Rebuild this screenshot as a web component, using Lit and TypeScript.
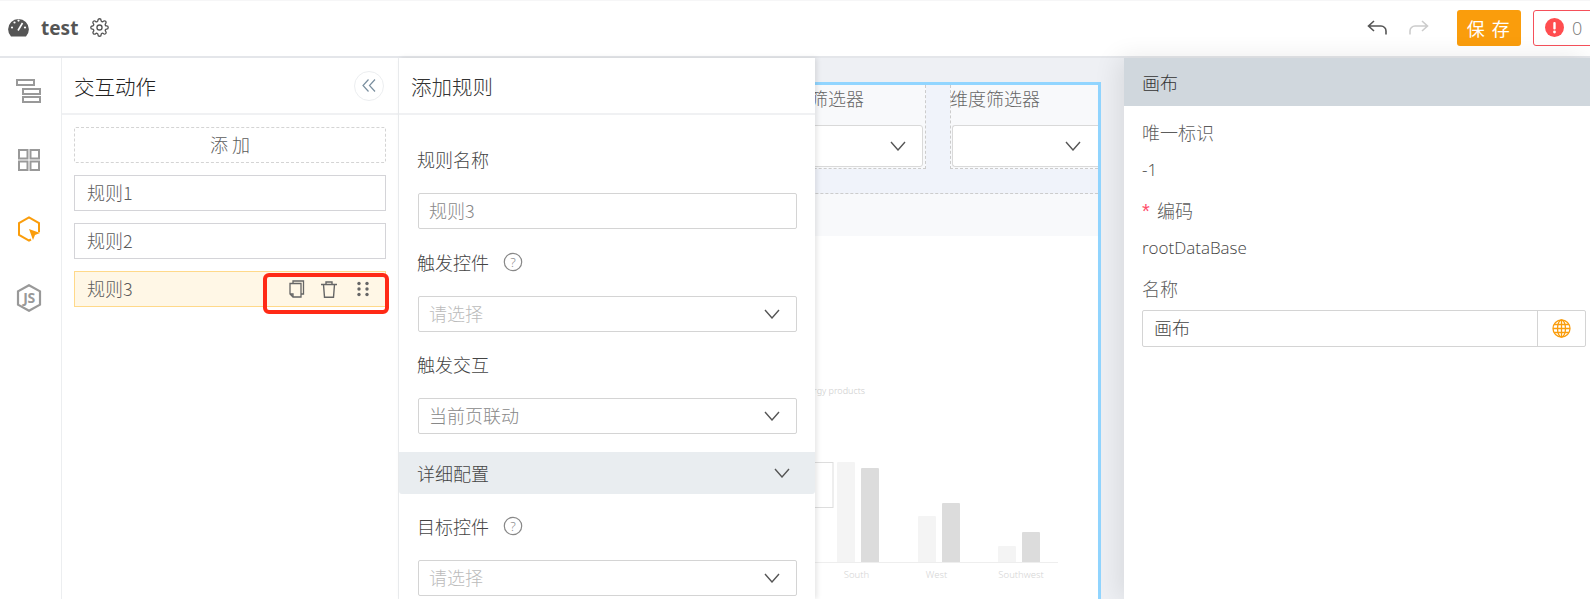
import { LitElement, html, css, svg } from "lit";
import { customElement } from "lit/decorators.js";

const chevron = html`<svg class="chev" width="16" height="10" viewBox="0 0 16 10"><path d="M1 1l7 8 7-8" fill="none" stroke="#555" stroke-width="1.4"/></svg>`;
const help = html`<svg class="help" width="20" height="20" viewBox="0 0 20 20"><circle cx="10" cy="10" r="8.7" fill="none" stroke="#888" stroke-width="1.2"/><text x="10" y="14.800" text-anchor="middle" font-size="13" fill="#888" font-family="Noto Sans">?</text></svg>`;
const gearPath = "M19.4 15a1.65 1.65 0 0 0 .33 1.82l.06.06a2 2 0 0 1 0 2.83 2 2 0 0 1-2.83 0l-.06-.06a1.65 1.65 0 0 0-1.82-.33 1.65 1.65 0 0 0-1 1.51V21a2 2 0 0 1-2 2 2 2 0 0 1-2-2v-.09A1.65 1.65 0 0 0 9 19.4a1.65 1.65 0 0 0-1.82.33l-.06.06a2 2 0 0 1-2.83 0 2 2 0 0 1 0-2.83l.06-.06a1.65 1.65 0 0 0 .33-1.82 1.65 1.65 0 0 0-1.51-1H3a2 2 0 0 1-2-2 2 2 0 0 1 2-2h.09A1.65 1.65 0 0 0 4.6 9a1.65 1.65 0 0 0-.33-1.82l-.06-.06a2 2 0 0 1 0-2.83 2 2 0 0 1 2.83 0l.06.06a1.65 1.65 0 0 0 1.82.33H9a1.65 1.65 0 0 0 1-1.51V3a2 2 0 0 1 2-2 2 2 0 0 1 2 2v.09a1.65 1.65 0 0 0 1 1.51 1.65 1.65 0 0 0 1.82-.33l.06-.06a2 2 0 0 1 2.83 0 2 2 0 0 1 0 2.83l-.06.06a1.65 1.65 0 0 0-.33 1.82V9a1.65 1.65 0 0 0 1.51 1H21a2 2 0 0 1 2 2 2 2 0 0 1-2 2h-.09a1.65 1.65 0 0 0-1.51 1z";

const bars: [number, number, number, string][] = [
  [836, 462, 18, "#f4f4f4"], [860, 468, 18, "#dcdcdc"],
  [917, 516, 18, "#f4f4f4"], [941, 503, 18, "#dcdcdc"],
  [997, 546, 18, "#f4f4f4"], [1021, 532, 18, "#dcdcdc"],
];
const xLabels: [number, string][] = [[855.5, "South"], [935.5, "West"], [1020, "Southwest"]];

@customElement("app-root")
export class AppRoot extends LitElement {
  static styles = css`
    :host { display: block; height: 599px; overflow: hidden; background: #fff; color: #5c5c5c;
      font-family: "Noto Sans CJK SC", "Open Sans", sans-serif; font-size: 18px; font-weight: 300; }
    * { box-sizing: border-box; }
    svg { display: block; flex: none; }
    .top { height: 58px; display: flex; align-items: center; padding: 0 0 2px 8px; border-top: 1px solid #f6f6f7; border-bottom: 2px solid #e4e6ea; overflow: hidden; }
    .name { font-family: "Noto Sans", sans-serif; font-weight: 700; font-size: 19px; color: #555; margin: 0 12px 0 12px; line-height: 24px; }
    .undo { margin-left: auto; margin-right: 22px; }
    .redo { margin-right: 28px; }
    .save { width: 64px; height: 36px; background: #fa9d0c; color: #fff; border-radius: 3px; display: flex; align-items: center; justify-content: center; letter-spacing: 1.5px; margin-right: 12px; font-weight: 400; }
    .err { flex: none; width: 76px; height: 36px; margin-right: -19px; border: 1px solid #f5505a; border-radius: 3px; display: flex; align-items: center; padding-left: 11px; gap: 8px; color: #777; font-family: "Open Sans", sans-serif; }
    .main { display: flex; height: 541px; }
    .rail { width: 62px; flex: none; border-right: 1px solid #eceef0; display: flex; flex-direction: column; align-items: center; padding: 20px 3px 0 0; gap: 43px; }
    .rail-cell { height: 26px; display: flex; align-items: center; justify-content: center; }
    .p1 { width: 337px; flex: none; border-right: 1px solid #eceef0; }
    .head { height: 57px; display: flex; align-items: center; border-bottom: 2px solid #f0f1f3; font-size: 20.5px; color: #333; }
    .p1 .head { padding: 0 14px 0 12px; justify-content: space-between; color: #222; }
    .collapse { width: 30px; height: 30px; border: 1px solid #eceef0; border-radius: 50%; display: flex; align-items: center; justify-content: center; }
    .list { padding: 12px 12px 0; display: flex; flex-direction: column; gap: 12px; }
    .add { height: 36px; border: 1px dashed #d4d4d4; border-radius: 2px; display: flex; align-items: center; justify-content: center; padding-bottom: 2px; }
    .rule { height: 36px; border: 1px solid #d4d4d8; display: flex; align-items: center; padding: 0 0 2px 12px; position: relative; }
    .rule.on { background: #fff7e6; border-color: #ffd98a; }
    .acts { margin-left: auto; display: flex; align-items: center; gap: 16px; padding: 2px 15px 0 0; }
    .trash { margin-right: 3px; }
    .mark { position: absolute; left: 188px; top: 1px; width: 126px; height: 41px; border: 4px solid #ff2a16; border-radius: 6px; }
    .p2 { width: 416px; flex: none; background: #fff; position: relative; z-index: 2; box-shadow: 2px 0 5px rgba(0,0,0,.1); }
    .p2 .head { padding-left: 12px; }
    .form { padding: 27px 18px 0 19px; }
    .item { margin-bottom: 16px; }
    .item:nth-child(2) { margin-bottom: 15px; }
    .item.last { margin-bottom: 18px; }
    .label { height: 36px; margin: 0 0 15px -1px; display: flex; align-items: center; gap: 14px; color: #444; padding-bottom: 2px; }
    .field { height: 36px; border: 1px solid #d4d4d4; border-radius: 2px; display: flex; align-items: center; justify-content: space-between; padding: 0 16px 0 10px; }
    .field span { padding-bottom: 2px; }
    .ph { color: #bbb; }
    .val { color: #888; }
    .band { height: 42px; background: #e9edf0; border-radius: 0 0 3px 3px; display: flex; align-items: center; justify-content: space-between; padding: 0 25px 0 18px; color: #444; }
    .form2 { padding: 15px 18px 0 19px; }
    .canvas { flex: 1; min-width: 0; background: #eef0f4; display: flex; justify-content: flex-end; padding: 24px 23px 0 0; overflow: hidden; }
    .frame { flex: none; width: 700px; height: 600px; border-top: 3px solid #91d5ff; border-right: 3px solid #91d5ff; background: #fff; }
    .filters { height: 109px; background: #f0f3fa; display: flex; justify-content: flex-end; border-bottom: 1px dashed #ccc; align-items: flex-start; }
    .filter { height: 84px; background: #f8f9fb; border: 1px dashed #ccc; border-top: none; padding: 0 2px 0 1px; }
    .filter.a { width: 152px; margin-right: 24px; }
    .filter.b { width: 148px; border-right: none; padding-right: 0; }
    .flabel { height: 40px; line-height: 26px; color: #666; margin-left: -2px; white-space: nowrap; }
    .fsel { height: 42px; background: #fff; border: 1px solid #d9d9d9; border-radius: 3px; display: flex; align-items: center; justify-content: flex-end; padding-right: 16px; }
    .filter.b .fsel { border-right: none; border-radius: 3px 0 0 3px; padding-right: 17px; }
    .strip { height: 42px; background: #f8f9fb; }
    .chart { margin-left: auto; }
    .chart text { font-family: "Noto Sans", sans-serif; }
    .right { width: 466px; flex: none; background: #fff; position: relative; box-shadow: -6px 0 24px rgba(0,0,0,.09); }
    .rhead { height: 48px; background: #d0d7dd; display: flex; align-items: center; padding-left: 18px; color: #333; }
    .rbody { padding: 8px 4px 0 18px; }
    .rl, .rv { height: 37px; display: flex; align-items: center; }
    .rl { padding-bottom: 1px; }
    .rv { margin-bottom: 4px; font-size: 17px; font-family: "Open Sans", sans-serif; color: #444; }
    .star { color: #ff4d6a; width: 15px; font-size: 20px; font-family: "Liberation Sans", sans-serif; padding-top: 3px; }
    .rinput { height: 37px; margin-top: 3px; border: 1px solid #d4d4d4; border-radius: 2px; display: flex; align-items: center; color: #444; }
    .rtext { flex: 1; padding: 0 0 3px 11px; }
    .addon { width: 48px; height: 100%; border-left: 1px solid #d4d4d4; display: flex; align-items: center; justify-content: center; }
  `;

  field(label: string, value: string, kind: string, withHelp = false, last = false) {
    return html`<div class="item ${last ? "last" : ""}">
      <div class="label">${label}${withHelp ? help : ""}</div>
      <div class="field"><span class=${kind}>${value}</span>${kind === "val" && value === "规则3" ? "" : chevron}</div>
    </div>`;
  }

  render() {
    return html`
      <div class="top">
        <svg width="21" height="21" viewBox="0 0 21 21"><path d="M3 19.5A10.4 10.4 0 1 1 18 19.5z" fill="#555"/><g fill="#fff"><circle cx="4" cy="10.5" r="1.1"/><circle cx="6.5" cy="5.5" r="1.1"/><circle cx="10.5" cy="3.6" r="1.1"/><circle cx="17" cy="10.5" r="1.1"/></g><path d="M10 13.5l4.5-7.5" stroke="#fff" stroke-width="1.6"/></svg>
        <span class="name">test</span>
        <svg width="19" height="19" viewBox="0 0 24 24" fill="none" stroke="#555" stroke-width="1.7"><circle cx="12" cy="12" r="3.2"/><path d=${gearPath}/></svg>
        <svg class="undo" width="20" height="15" viewBox="0 0 20 15" fill="none" stroke="#555" stroke-width="1.6"><path d="M7 1L1.5 6 7 11M1.5 6H14a5 5 0 0 1 5 5v3.5"/></svg>
        <svg class="redo" width="20" height="15" viewBox="0 0 20 15" fill="none" stroke="#ccc" stroke-width="1.6"><path d="M13 1l5.500 5L13 11M18.500 6H6a5 5 0 0 0-5 5v3.500"/></svg>
        <div class="save">保 存</div>
        <div class="err">
          <svg width="19" height="19" viewBox="0 0 19 19"><circle cx="9.500" cy="9.500" r="9.500" fill="#ff4d4f"/><rect x="8.300" y="4" width="2.400" height="7.500" rx="1" fill="#fff"/><circle cx="9.500" cy="14" r="1.400" fill="#fff"/></svg>
          <span>0</span>
        </div>
      </div>
      <div class="main">
        <div class="rail">
          <div class="rail-cell"><svg width="26" height="26" viewBox="0 0 26 26" fill="none" stroke="#999" stroke-width="2"><rect x="1" y="2" width="17" height="5"/><rect x="7" y="11" width="17" height="5"/><rect x="7" y="19" width="17" height="5"/></svg></div>
          <div class="rail-cell"><svg width="24" height="24" viewBox="0 0 24 24" fill="none" stroke="#999" stroke-width="2"><rect x="2" y="2" width="8.500" height="8.500"/><rect x="13.500" y="2" width="8.500" height="8.500"/><rect x="2" y="13.500" width="8.500" height="8.500"/><rect x="13.500" y="13.500" width="8.500" height="8.500"/></svg></div>
          <div class="rail-cell"><svg width="24" height="26" viewBox="0 0 24 26"><path d="M14 23.500l-2 1L2 18.800V7.200L12 1.500l10 5.700v9" fill="none" stroke="#fa9d0c" stroke-width="2"/><path d="M12 13l11 4-5 2-2 5z" fill="#fa9d0c"/></svg></div>
          <div class="rail-cell"><svg width="26" height="28" viewBox="0 0 26 28"><path d="M13 1.200l11 6.200v13.200l-11 6.200-11-6.200V7.400z" fill="none" stroke="#999" stroke-width="2.200"/><text x="13" y="19" text-anchor="middle" font-size="14" font-weight="700" letter-spacing="-.5" fill="#999" font-family="Noto Sans">JS</text></svg></div>
        </div>
        <div class="p1">
          <div class="head"><span>交互动作</span>
            <div class="collapse"><svg width="14" height="13" viewBox="0 0 14 13" fill="none" stroke="#7a8f9f" stroke-width="1.200"><path d="M6.500 .5L1 6.500l5.500 6M13 .5L7.500 6.500l5.500 6"/></svg></div>
          </div>
          <div class="list">
            <div class="add">添 加</div>
            <div class="rule">规则1</div>
            <div class="rule">规则2</div>
            <div class="rule on">规则3
              <div class="acts">
                <svg width="16" height="18" viewBox="0 0 16 18" fill="none" stroke="#666" stroke-width="1.300"><path d="M4 3.500V1h10.500v13H12"/><path d="M1 3.500h11V17H4l-3-3zM1 14h3v3"/></svg>
                <svg class="trash" width="16" height="17" viewBox="0 0 16 17" fill="none" stroke="#666" stroke-width="1.400"><path d="M0 3.500h16M5 3.500V1h6v2.500M2.500 3.500l1 12.800h9l1-12.800"/></svg>
                <svg width="14" height="16" viewBox="0 0 14 16" fill="#666"><circle cx="3" cy="2.500" r="1.700"/><circle cx="11" cy="2.500" r="1.700"/><circle cx="3" cy="8" r="1.700"/><circle cx="11" cy="8" r="1.700"/><circle cx="3" cy="13.500" r="1.700"/><circle cx="11" cy="13.500" r="1.700"/></svg>
              </div>
              <div class="mark"></div>
            </div>
          </div>
        </div>
        <div class="p2">
          <div class="head">添加规则</div>
          <div class="form">
            ${this.field("规则名称", "规则3", "val")}
            ${this.field("触发控件", "请选择", "ph", true)}
            ${this.field("触发交互", "当前页联动", "val", false, true)}
          </div>
          <div class="band"><span>详细配置</span>${chevron}</div>
          <div class="form2">${this.field("目标控件", "请选择", "ph", true)}</div>
        </div>
        <div class="canvas">
          <div class="frame">
            <div class="filters">
              <div class="filter a"><div class="flabel">维度筛选器</div><div class="fsel">${chevron}</div></div>
              <div class="filter b"><div class="flabel">维度筛选器</div><div class="fsel">${chevron}</div></div>
            </div>
            <div class="strip"></div>
            <svg class="chart" width="300" height="363" viewBox="797 236 300 363">
              <text x="864" y="394" text-anchor="end" font-size="9" fill="#ccc">Sales of energy products</text>
              <rect x="780" y="462.500" width="52" height="45" fill="none" stroke="#ddd"/>
              ${bars.map(([x, y, w, c]) => svg`<path d="M${x} 562V${y + 1}q0-1 1-1h${w - 2}q1 0 1 1V562z" fill=${c}/>`)}
              <path d="M797 562.500H1057" stroke="#eee"/>
              ${xLabels.map(([x, t]) => svg`<text x=${x} y="578" text-anchor="middle" font-size="9.500" fill="#d4d4d4">${t}</text>`)}
            </svg>
          </div>
        </div>
        <div class="right">
          <div class="rhead">画布</div>
          <div class="rbody">
            <div class="rl">唯一标识</div>
            <div class="rv">-1</div>
            <div class="rl"><span class="star">*</span>编码</div>
            <div class="rv">rootDataBase</div>
            <div class="rl">名称</div>
            <div class="rinput"><span class="rtext">画布</span>
              <div class="addon"><svg width="19" height="19" viewBox="0 0 19 19" fill="none" stroke="#fa9d0c" stroke-width="1.300"><circle cx="9.500" cy="9.500" r="8.500"/><ellipse cx="9.500" cy="9.500" rx="4" ry="8.500"/><path d="M9.500 1v17M1 9.500h17M2 5.500h15M2 13.500h15"/></svg></div>
            </div>
          </div>
        </div>
      </div>
    `;
  }
}
